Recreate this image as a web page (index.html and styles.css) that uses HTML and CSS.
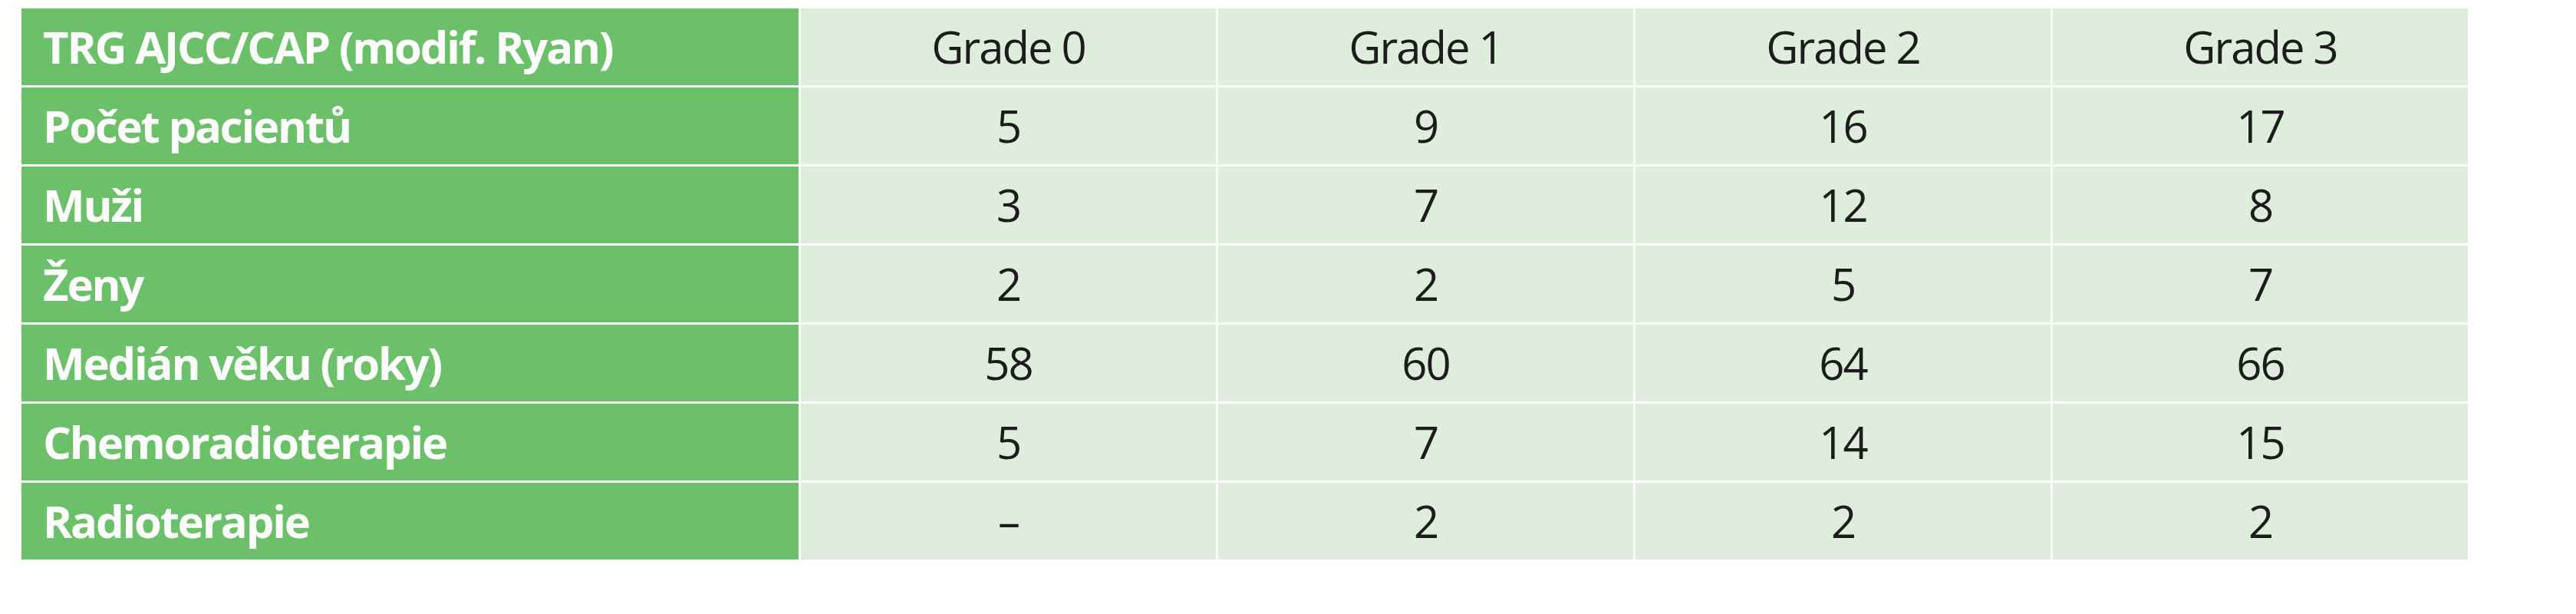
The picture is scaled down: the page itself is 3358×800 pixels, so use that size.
FILE: index.html
```html
<!DOCTYPE html>
<html lang="cs">
<head>
<meta charset="utf-8">
<title>TRG</title>
<link rel="stylesheet" href="styles.css">
</head>
<body>
<div class="table">
  <div class="cell label">TRG AJCC/CAP (modif. Ryan)</div>
  <div class="cell val">Grade 0</div>
  <div class="cell val">Grade 1</div>
  <div class="cell val">Grade 2</div>
  <div class="cell val">Grade 3</div>

  <div class="cell label">Počet pacientů</div>
  <div class="cell val">5</div>
  <div class="cell val">9</div>
  <div class="cell val">16</div>
  <div class="cell val">17</div>

  <div class="cell label">Muži</div>
  <div class="cell val">3</div>
  <div class="cell val">7</div>
  <div class="cell val">12</div>
  <div class="cell val">8</div>

  <div class="cell label">Ženy</div>
  <div class="cell val">2</div>
  <div class="cell val">2</div>
  <div class="cell val">5</div>
  <div class="cell val">7</div>

  <div class="cell label">Medián věku (roky)</div>
  <div class="cell val">58</div>
  <div class="cell val">60</div>
  <div class="cell val">64</div>
  <div class="cell val">66</div>

  <div class="cell label">Chemoradioterapie</div>
  <div class="cell val">5</div>
  <div class="cell val">7</div>
  <div class="cell val">14</div>
  <div class="cell val">15</div>

  <div class="cell label">Radioterapie</div>
  <div class="cell val">–</div>
  <div class="cell val">2</div>
  <div class="cell val">2</div>
  <div class="cell val">2</div>
</div>
</body>
</html>
```
FILE: styles.css
```css
html, body {
  margin: 0;
  padding: 0;
  background: #ffffff;
}
body {
  padding: 11px 0 0 28px;
  font-family: "Open Sans", "Noto Sans", "Liberation Sans", sans-serif;
}
.table {
  display: grid;
  grid-template-columns: 1013px repeat(4, 541px);
  grid-auto-rows: 100px;
  gap: 3px;
  width: max-content;
}
.cell {
  display: flex;
  align-items: center;
  font-size: 58px;
  line-height: 1;
}
.label {
  background: #6cc06a;
  color: #ffffff;
  font-weight: 700;
  padding-left: 28px;
  letter-spacing: -2.2px;
}
.val {
  background: #dfeedc;
  color: #1c1c1c;
  justify-content: center;
  letter-spacing: -2px;
}
```
